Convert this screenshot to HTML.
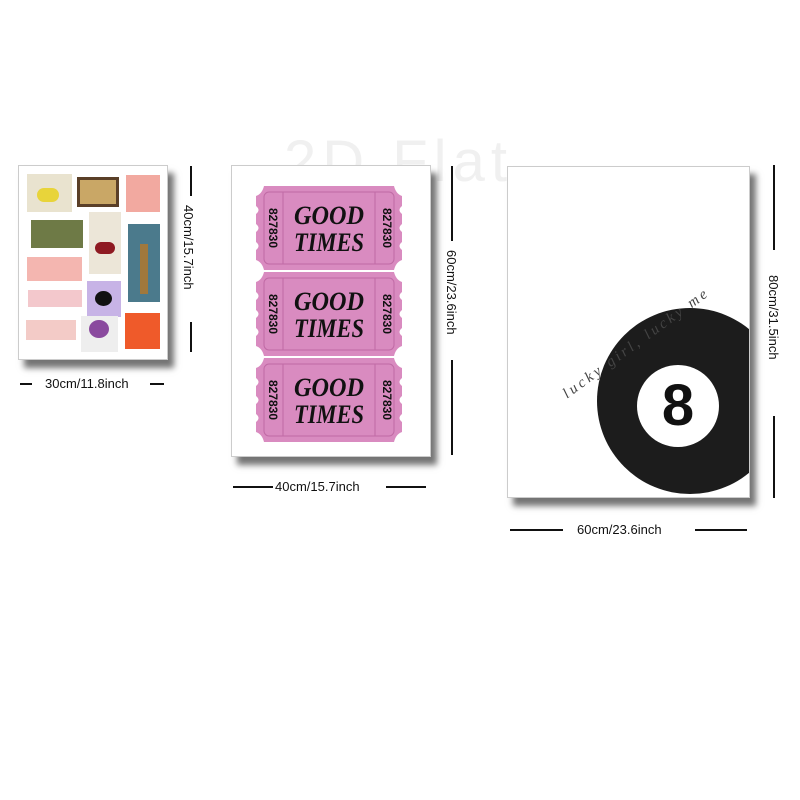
<!DOCTYPE html>
<html><head><meta charset="utf-8"><style>
body{margin:0;width:800px;height:800px;background:#fff;position:relative;overflow:hidden;font-family:"Liberation Sans",sans-serif}
.f{position:absolute;background:#fff;border:1px solid #ccc;box-shadow:6px 8px 6px rgba(0,0,0,.55)}
.lbl{position:absolute;font-size:13px;color:#111;white-space:nowrap}
.ln{position:absolute;background:#111}
.v{writing-mode:vertical-rl}
.m{position:absolute}
</style></head><body>
<div style="position:absolute;left:284px;top:128px;font-size:58px;color:#f0f0f0;letter-spacing:6px">2D Flat</div>

<!-- left frame -->
<div class="f" style="left:18px;top:165px;width:148px;height:193px">
 <div class="m" style="left:8px;top:8px;width:45px;height:38px;background:#e9e3cf"><div style="margin:14px 0 0 10px;width:22px;height:14px;background:#e8d43a;border-radius:7px"></div></div>
 <div class="m" style="left:58px;top:11px;width:42px;height:30px;background:#5a3f28"><div style="margin:3px;height:24px;background:#c9a766"></div></div>
 <div class="m" style="left:107px;top:9px;width:34px;height:37px;background:#f2a9a0"></div>
 <div class="m" style="left:12px;top:54px;width:52px;height:28px;background:#6e7a46"></div>
 <div class="m" style="left:70px;top:46px;width:32px;height:62px;background:#ece6d8"><div style="margin:30px 0 0 6px;width:20px;height:12px;background:#8e1a22;border-radius:6px"></div></div>
 <div class="m" style="left:109px;top:58px;width:32px;height:78px;background:#4b7a8c"><div style="margin:20px 0 0 12px;width:8px;height:50px;background:#a0783c"></div></div>
 <div class="m" style="left:8px;top:91px;width:55px;height:24px;background:#f4b6b0"></div>
 <div class="m" style="left:9px;top:124px;width:54px;height:17px;background:#f3c8cc"></div>
 <div class="m" style="left:68px;top:115px;width:34px;height:36px;background:#c7b3e6"><div style="margin:10px 0 0 8px;width:17px;height:15px;background:#111;border-radius:50%"></div></div>
 <div class="m" style="left:7px;top:154px;width:50px;height:20px;background:#f3cbc7"></div>
 <div class="m" style="left:62px;top:150px;width:37px;height:36px;background:#eee"><div style="margin:4px 0 0 8px;width:20px;height:18px;background:#8a4a9e;border-radius:50%"></div></div>
 <div class="m" style="left:106px;top:147px;width:35px;height:36px;background:#ef5a2a"></div>
</div>
<div class="ln" style="left:190px;top:166px;width:2px;height:30px"></div>
<div class="ln" style="left:190px;top:322px;width:2px;height:30px"></div>
<div class="lbl v" style="left:181px;top:205px">40cm/15.7inch</div>
<div class="ln" style="left:20px;top:383px;width:12px;height:2px"></div>
<div class="lbl" style="left:45px;top:376px">30cm/11.8inch</div>
<div class="ln" style="left:150px;top:383px;width:14px;height:2px"></div>

<!-- middle frame -->
<div class="f" style="left:231px;top:165px;width:198px;height:290px"></div>
<svg width="800" height="800" style="position:absolute;left:0;top:0">
<defs><g id="tk">
<path d="M8,0 H138 Q140,8 146,10 V20 Q141,24 146,28 V38 Q141,42 146,46 V56 Q141,60 146,64 V74 Q140,76 138,84 H8 Q6,76 0,74 V64 Q5,60 0,56 V46 Q5,42 0,38 V28 Q5,24 0,20 V10 Q6,8 8,0 Z" fill="#d98bc0"/>
<rect x="8" y="6" width="130" height="72" rx="5" fill="none" stroke="#c06aa5" stroke-width="1"/>
<line x1="27" y1="6" x2="27" y2="78" stroke="#c06aa5"/><line x1="119" y1="6" x2="119" y2="78" stroke="#c06aa5"/>
<text x="73" y="38" text-anchor="middle" font-family="Liberation Serif" font-size="26" font-style="italic" font-weight="bold" fill="#111" textLength="70" lengthAdjust="spacingAndGlyphs">GOOD</text>
<text x="73" y="65" text-anchor="middle" font-family="Liberation Serif" font-size="26" font-style="italic" font-weight="bold" fill="#111" textLength="70" lengthAdjust="spacingAndGlyphs">TIMES</text>
<text transform="translate(13,42) rotate(90)" text-anchor="middle" font-family="Liberation Sans" font-weight="bold" font-size="12" fill="#111">827830</text>
<text transform="translate(127,42) rotate(90)" text-anchor="middle" font-family="Liberation Sans" font-weight="bold" font-size="12" fill="#111">827830</text>
</g></defs>
<use href="#tk" x="256" y="186"/><use href="#tk" x="256" y="272"/><use href="#tk" x="256" y="358"/>
</svg>
<div class="ln" style="left:451px;top:166px;width:2px;height:75px"></div>
<div class="ln" style="left:451px;top:360px;width:2px;height:95px"></div>
<div class="lbl v" style="left:444px;top:250px">60cm/23.6inch</div>
<div class="ln" style="left:233px;top:486px;width:40px;height:2px"></div>
<div class="lbl" style="left:275px;top:479px">40cm/15.7inch</div>
<div class="ln" style="left:386px;top:486px;width:40px;height:2px"></div>

<!-- right frame -->
<div class="f" style="left:507px;top:166px;width:241px;height:330px;overflow:hidden">
 <div style="position:absolute;left:89px;top:141px;width:186px;height:186px;border-radius:50%;background:#1c1c1c"></div>
 <div style="position:absolute;left:129px;top:198px;width:82px;height:82px;border-radius:50%;background:#fff;text-align:center;line-height:82px;font-size:58px;font-weight:bold;color:#111">8</div>
 <div style="position:absolute;left:52px;top:222px;font-family:'Liberation Serif',serif;font-style:italic;font-size:15px;color:#444;transform:rotate(-36deg);transform-origin:left top;white-space:nowrap;letter-spacing:3px">lucky girl, lucky me</div>
</div>
<div class="ln" style="left:773px;top:165px;width:2px;height:85px"></div>
<div class="ln" style="left:773px;top:416px;width:2px;height:82px"></div>
<div class="lbl v" style="left:766px;top:275px">80cm/31.5inch</div>
<div class="ln" style="left:510px;top:529px;width:53px;height:2px"></div>
<div class="lbl" style="left:577px;top:522px">60cm/23.6inch</div>
<div class="ln" style="left:695px;top:529px;width:52px;height:2px"></div>
</body></html>
